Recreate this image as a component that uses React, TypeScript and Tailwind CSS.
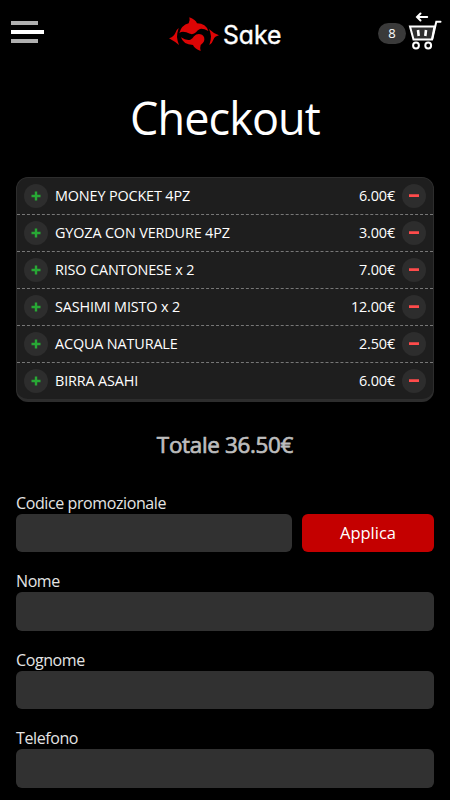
import { useState } from "react";

interface CartItem {
  name: string;
  quantity: number;
  total: string;
}

const items: CartItem[] = [
  { name: "MONEY POCKET 4PZ", quantity: 1, total: "6.00€" },
  { name: "GYOZA CON VERDURE 4PZ", quantity: 1, total: "3.00€" },
  { name: "RISO CANTONESE", quantity: 2, total: "7.00€" },
  { name: "SASHIMI MISTO", quantity: 2, total: "12.00€" },
  { name: "ACQUA NATURALE", quantity: 1, total: "2.50€" },
  { name: "BIRRA ASAHI", quantity: 1, total: "6.00€" },
];

const Logo = () => (
  <svg width="130" height="50" viewBox="0 0 390 150" aria-label="Sake">
    <g fill="#dc0505" transform="translate(18 12)">
      <path d="M9 73Q23 69 28 57Q31 47 38 42Q33 57 33 69Q34 81 39 93Q27 83 9 73Z" />
      <path d="M159 64Q146 67 142 77Q139 87 130 93Q135 79 135 67Q134 55 129 45Q142 58 159 64Z" />
      <path d="M70 10Q89 17 93 28Q120 29 127 51Q112 43 102 45Q95 48 90 55Q80 66 61 55Q48 50 40 57Q46 34 68 28Q73 20 70 10Z" />
      <path d="M104 111Q85 104 81 93Q51 92 45 70Q60 80 73 77Q80 74 84 67Q93 57 108 62Q118 69 114 82Q111 89 104 93Q101 102 104 111Z" />
    </g>
    <text
      x="189"
      y="102"
      fill="#fff"
      fontSize="77"
      fontWeight="400"
      stroke="#fff"
      strokeWidth="1.2"
      textLength="175"
      lengthAdjust="spacingAndGlyphs"
      className="font-['Inter',sans-serif] [font-feature-settings:'cv11']"
    >
      Sake
    </text>
  </svg>
);

const CartIcon = () => (
  <svg width="34" height="38" viewBox="408 12 34 38" fill="none" stroke="#fff" strokeWidth="2">
    <path d="M427.2 17H417.2M420.5 13.5L417 17L420.5 20.5" strokeLinecap="round" />
    <path d="M410 26.5H434.5L432 39.5H413.5Z" fill="#303030" />
    <path d="M432.3 39L436.3 21.7H440.5" strokeLinecap="round" />
    <path d="M418 30L418.7 36M426 30L425.3 36" strokeWidth="2.6" />
    <circle cx="416" cy="45.5" r="2.9" />
    <circle cx="428.2" cy="45.5" r="2.9" />
  </svg>
);

const RoundButton = ({ type }: { type: "add" | "remove" }) => (
  <button
    type="button"
    aria-label={type}
    className="flex size-6 shrink-0 items-center justify-center rounded-full bg-[#2d2d2d]"
  >
    <svg width="10" height="10" viewBox="0 0 10 10">
      {type === "add" ? (
        <path d="M0.5 5H9.5M5 0.5V9.5" stroke="#28a835" strokeWidth="2.4" />
      ) : (
        <path d="M0 4.6H10" stroke="#ff4b4b" strokeWidth="2.8" />
      )}
    </svg>
  </button>
);

const Field = ({ label, name }: { label: string; name: string }) => {
  const [value, setValue] = useState<string>("");

  return (
    <label className="block flex-1">
      <span className="block h-6 pt-px text-base leading-6 tracking-[-0.4px]">{label}</span>
      <input
        name={name}
        value={value}
        onChange={(event) => setValue(event.target.value)}
        className="block h-[38.4px] w-full rounded-md bg-[#313131] px-3 text-white outline-none"
      />
    </label>
  );
};

export default function App() {
  return (
    <div className="h-[800px] overflow-hidden bg-black font-['Open_Sans',sans-serif] text-[#e4e4e4]">
      <header className="flex h-[68px] items-start pt-[10px] pl-[10px]">
        <button type="button" aria-label="Menu" className="mt-[11px] flex w-[150px] flex-col gap-[5px] pl-px">
          <span className="h-[4px] w-[27px] bg-[#b0b0b0]" />
          <span className="h-[4px] w-[33px] bg-white" />
          <span className="h-[4px] w-[27px] bg-[#b0b0b0]" />
        </button>
        <Logo />
        <div className="mt-[2px] flex w-[152px] items-start justify-end gap-[2px]">
          <span className="mt-[11px] flex h-[21px] w-7 items-center justify-center rounded-full bg-[#3a3a3a] text-[13px] text-white">
            8
          </span>
          <CartIcon />
        </div>
      </header>

      <main className="px-4">
        <h1 className="mt-[20px] text-center text-[45px] leading-[60px] tracking-[-0.9px] text-white">
          Checkout
        </h1>

        <ul className="mt-[29px] overflow-hidden rounded-xl border border-b-[3px] border-[#2d2d2d] bg-[#1e1e1e]">
          {items.map((item) => (
            <li
              key={item.name}
              className="flex h-[37px] items-center border-b border-dashed border-[#777] px-[7px] text-[14.4px] tracking-[-0.14px] text-white last:h-9 last:border-b-0"
            >
              <RoundButton type="add" />
              <span className="ml-[7px] flex-1">
                {item.name}
                {item.quantity > 1 && ` x ${item.quantity}`}
              </span>
              <span className="mr-[7px]">{item.total}</span>
              <RoundButton type="remove" />
            </li>
          ))}
        </ul>

        <p className="mt-[27px] text-center text-[22.4px] leading-8 tracking-[-0.3px] text-[#bdbdbd] [-webkit-text-stroke:0.7px_#bdbdbd]">
          Totale 36.50€
        </p>

        <form className="mt-[29px] flex flex-col gap-4" onSubmit={(event) => event.preventDefault()}>
          <div className="flex items-end gap-[10px]">
            <Field label="Codice promozionale" name="promo" />
            <button
              type="submit"
              className="h-[38.4px] w-[132px] rounded-md bg-[#c40000] text-[16.5px] text-white"
            >
              Applica
            </button>
          </div>
          <Field label="Nome" name="nome" />
          <Field label="Cognome" name="cognome" />
          <Field label="Telefono" name="telefono" />
        </form>
      </main>
    </div>
  );
}
